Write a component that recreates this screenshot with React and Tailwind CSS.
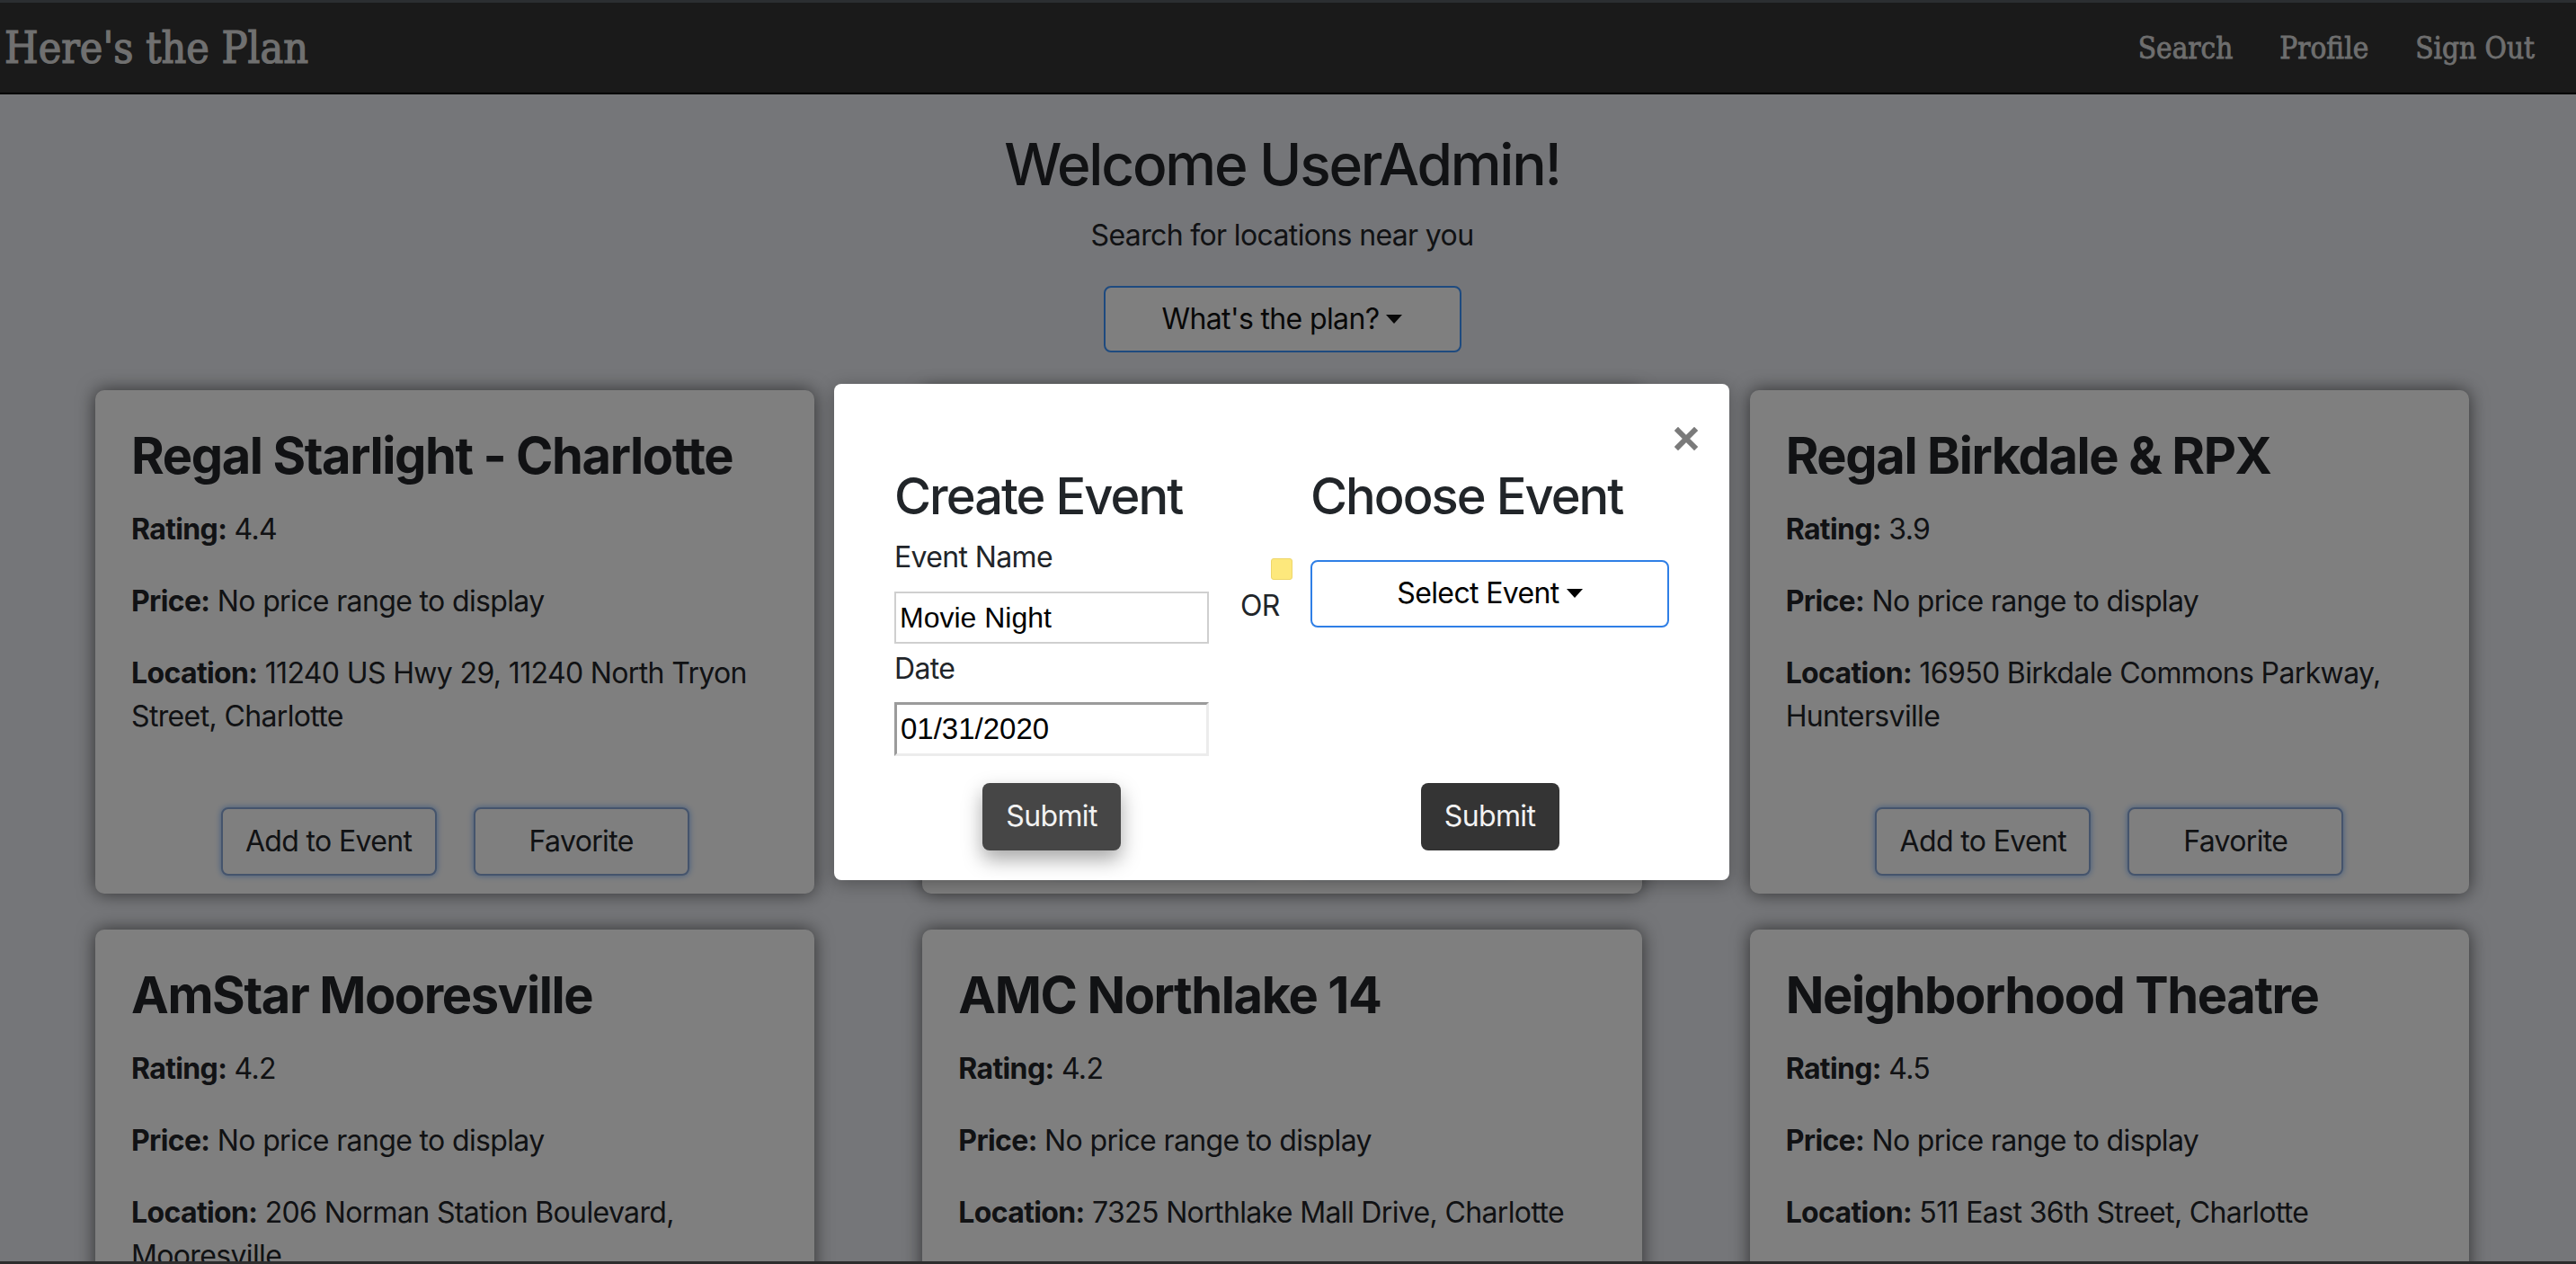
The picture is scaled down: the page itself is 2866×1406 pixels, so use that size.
import React from "react";

const cards = [
  { title: "Regal Starlight - Charlotte", rating: "4.4", location: "11240 US Hwy 29, 11240 North Tryon Street, Charlotte" },
  { title: "AMC Concord Mills 24", rating: "4.3", location: "8421 Concord Mills Boulevard, Concord" },
  { title: "Regal Birkdale & RPX", rating: "3.9", location: "16950 Birkdale Commons Parkway, Huntersville" },
  { title: "AmStar Mooresville", rating: "4.2", location: "206 Norman Station Boulevard, Mooresville" },
  { title: "AMC Northlake 14", rating: "4.2", location: "7325 Northlake Mall Drive, Charlotte" },
  { title: "Neighborhood Theatre", rating: "4.5", location: "511 East 36th Street, Charlotte" },
];

function Caret() {
  return (
    <span className="ml-[8px] inline-block align-[0.255em] border-x-[9px] border-t-[10px] border-x-transparent border-t-current" />
  );
}

function Card({ title, rating, location }) {
  return (
    <div className="flex h-[560px] flex-col rounded-[10px] bg-white px-[40px] pt-[40px] pb-[20px] text-[#222428] shadow-[0_0_20px_rgba(0,0,0,0.6)]">
      <h3 className="mb-[24px] text-[56px] font-bold leading-[1.2] tracking-[-0.025em]">{title}</h3>
      <p className="mb-[32px] text-[32px] leading-[48px] tracking-[-0.02em]">
        <strong className="font-bold">Rating:</strong> {rating}
      </p>
      <p className="mb-[32px] text-[32px] leading-[48px] tracking-[-0.02em]">
        <strong className="font-bold">Price:</strong> No price range to display
      </p>
      <p className="mb-[32px] text-[32px] leading-[48px] tracking-[-0.02em]">
        <strong className="font-bold">Location:</strong> {location}
      </p>
      <div className="mt-auto flex justify-center gap-[41px]">
        <button className="h-[76px] w-[240px] rounded-[8px] border-[2px] border-[#8aa8d8] bg-white text-[32px] tracking-[-0.02em] text-[#222428] shadow-[0_0_7px_rgba(0,110,255,0.5)]">
          Add to Event
        </button>
        <button className="h-[76px] w-[240px] rounded-[8px] border-[2px] border-[#8aa8d8] bg-white text-[32px] tracking-[-0.02em] text-[#222428] shadow-[0_0_7px_rgba(0,110,255,0.5)]">
          Favorite
        </button>
      </div>
    </div>
  );
}

function CloseIcon() {
  return (
    <svg width="26" height="26" viewBox="0 0 26 26" fill="none">
      <path d="M4 4 L22 22 M22 4 L4 22" stroke="#7a7a7a" strokeWidth="6" strokeLinecap="square" />
    </svg>
  );
}

function Modal() {
  return (
    <div className="flex w-[996px] flex-col rounded-[8px] bg-white text-[#212529] shadow-[0_4px_20px_rgba(0,0,0,0.3)]">
      <div className="flex h-[92px] justify-end pt-[48px] pr-[35px]">
        <CloseIcon />
      </div>
      <div className="flex px-[67px] pb-[33px]">
        <div className="flex w-[350px] flex-col">
          <h3 className="mb-[9px] text-[56px] font-medium leading-[1.2] tracking-[-0.035em]">Create Event</h3>
          <label className="text-[32px] leading-[48px] tracking-[-0.02em]">Event Name</label>
          <div className="mt-[14px] flex h-[58px] items-center border-[2px] border-[#cfcfcf] pl-[4px] font-['Liberation_Sans',sans-serif] text-[32px] text-black">
            Movie Night
          </div>
          <label className="mt-[4px] text-[32px] leading-[48px] tracking-[-0.02em]">Date</label>
          <div className="mt-[13px] flex h-[60px] items-center border-[3px] border-t-[#9b9b9b] border-l-[#9b9b9b] border-r-[#ececec] border-b-[#ececec] pl-[4px] font-['Liberation_Sans',sans-serif] text-[33px] text-black">
            01/31/2020
          </div>
          <div className="mt-[30px] flex justify-center">
            <button className="h-[75px] w-[154px] rounded-[8px] bg-[#464646] text-[32px] tracking-[-0.02em] text-[#f2f2f2] shadow-[0_10px_22px_rgba(0,0,0,0.35)]">
              Submit
            </button>
          </div>
        </div>
        <div className="flex w-[113px] flex-col pt-[102px]">
          <div className="ml-[69px] h-[24px] w-[24px] rounded-[3px] border border-[#eed66a] bg-[#fde87c]" />
          <div className="mt-[5px] ml-[35px] text-[32px] leading-[48px] tracking-[-0.02em]">OR</div>
        </div>
        <div className="flex w-[399px] flex-col">
          <h3 className="text-[56px] font-medium leading-[1.2] tracking-[-0.035em]">Choose Event</h3>
          <button className="mt-[36px] flex h-[75px] w-[399px] items-center justify-center rounded-[8px] border-[2px] border-[#2f7fe6] bg-white text-[32px] tracking-[-0.02em] text-black">
            Select Event
            <Caret />
          </button>
          <div className="mt-auto flex justify-center">
            <button className="h-[75px] w-[154px] rounded-[8px] bg-[#343434] text-[32px] tracking-[-0.02em] text-[#f2f2f2]">
              Submit
            </button>
          </div>
        </div>
      </div>
    </div>
  );
}

export default function App() {
  return (
    <div className="relative flex h-[1406px] w-full flex-col overflow-hidden bg-[#eaecf2] font-['Inter','Liberation_Sans',sans-serif]">
      <div className="h-[3px] shrink-0 bg-[#575d63]" />
      <nav className="flex h-[102px] shrink-0 items-center justify-between border-b-[2px] border-black bg-[#343434] pl-[5px] pr-[46px]">
        <div className="font-['DejaVu_Serif_Condensed','DejaVu_Serif',serif] text-[48px] leading-none text-[#e0e0e0] [font-stretch:condensed] [-webkit-text-stroke:1.2px_#e0e0e0]">
          Here's the Plan
        </div>
        <div className="flex gap-[52px] font-['DejaVu_Serif_Condensed','DejaVu_Serif',serif] text-[33px] leading-none text-[#dcdcdc] [font-stretch:condensed] [-webkit-text-stroke:0.8px_#dcdcdc]">
          <span>Search</span>
          <span>Profile</span>
          <span>Sign Out</span>
        </div>
      </nav>
      <main className="min-h-0 flex-1 overflow-hidden pl-[106px] pr-[119px]">
        <div className="flex flex-col items-center pt-[40px] text-[#222428]">
          <h2 className="mb-[16px] text-[64px] font-medium leading-[1.2] tracking-[-0.035em]">Welcome UserAdmin!</h2>
          <p className="mb-[32px] text-[32px] leading-[48px] tracking-[-0.02em]">Search for locations near you</p>
          <button className="flex h-[74px] w-[398px] items-center justify-center rounded-[8px] border-[2px] border-[#3d95ff] bg-white text-[32px] tracking-[-0.02em] text-[#111]">
            What's the plan?
            <Caret />
          </button>
        </div>
        <div className="mt-[42px] grid grid-cols-3 gap-x-[120px] gap-y-[40px]">
          {cards.map((c) => (
            <Card key={c.title} {...c} />
          ))}
        </div>
      </main>
      <div className="h-[3px] shrink-0 bg-[#5a5a5a]" />
      <div className="absolute inset-0 bg-black/50" />
      <div className="absolute inset-0 flex items-center justify-center pr-[14px]">
        <Modal />
      </div>
    </div>
  );
}
